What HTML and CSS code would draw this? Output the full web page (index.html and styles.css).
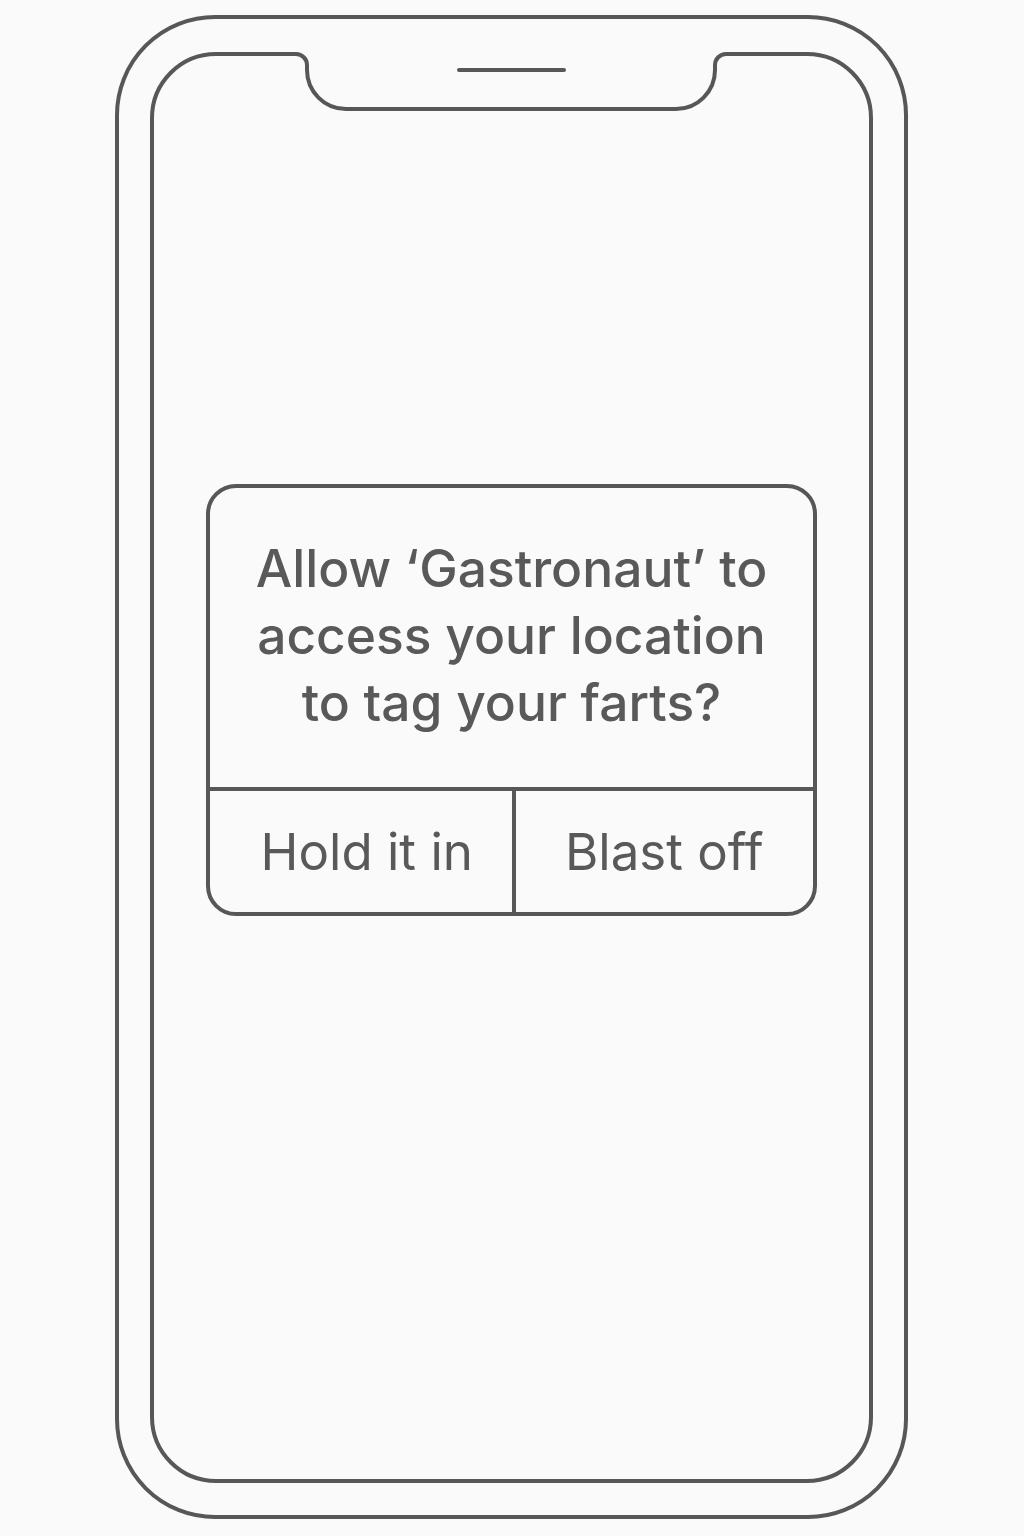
FILE: index.html
```html
<!DOCTYPE html>
<html lang="en">
<head>
<meta charset="utf-8">
<title>Location permission</title>
<link rel="stylesheet" href="styles.css">
</head>
<body>
<div class="phone">
  <div class="screen">
    <svg class="notch" width="723" height="64" viewBox="0 0 723 64" aria-hidden="true">
      <path class="notch-fill" d="M146,-1 L146,2 A11,11 0 0 1 157,13 L157,18 A39,39 0 0 0 196,57 L526,57 A39,39 0 0 0 565,18 L565,13 A11,11 0 0 1 576,2 L576,-1 Z"/>
      <path class="notch-line" d="M146,2 A11,11 0 0 1 157,13 L157,18 A39,39 0 0 0 196,57 L526,57 A39,39 0 0 0 565,18 L565,13 A11,11 0 0 1 576,2"/>
      <line class="speaker" x1="309" y1="18" x2="414" y2="18"/>
    </svg>
    <div class="dialog">
      <p class="dialog-title">Allow ‘Gastronaut’ to access your location to tag your farts?</p>
      <div class="dialog-actions">
        <div class="dialog-btn dialog-btn-left">Hold it in</div>
        <div class="dialog-btn dialog-btn-right">Blast off</div>
      </div>
    </div>
  </div>
</div>
</body>
</html>
```
FILE: styles.css
```css
html, body {
  margin: 0;
  padding: 0;
  background: #fafafa;
}

body {
  font-family: Inter, "Noto Sans", "Liberation Sans", sans-serif;
  color: #595959;
}

.phone {
  box-sizing: border-box;
  width: 793px;
  height: 1504px;
  margin: 15px 0 0 115px;
  padding: 33px 31px;
  border: 4px solid #575757;
  border-radius: 100px;
}

.screen {
  position: relative;
  box-sizing: border-box;
  width: 723px;
  height: 1431px;
  border: 4px solid #575757;
  border-radius: 66px;
  display: flex;
  flex-direction: column;
  align-items: center;
  padding-top: 428px;
}

.notch {
  position: absolute;
  left: -4px;
  top: -4px;
  overflow: visible;
}

.notch-fill {
  fill: #fafafa;
  stroke: none;
}

.notch-line {
  fill: none;
  stroke: #575757;
  stroke-width: 4;
}

.speaker {
  stroke: #575757;
  stroke-width: 4;
  stroke-linecap: round;
}

.dialog {
  box-sizing: border-box;
  width: 611px;
  border: 4px solid #575757;
  border-radius: 30px;
  display: flex;
  flex-direction: column;
}

.dialog-title {
  margin: 0;
  padding: 47px 30px 51px;
  border-bottom: 4px solid #575757;
  font-size: 51.5px;
  font-weight: 500;
  line-height: 67px;
  text-align: center;
}

.dialog-actions {
  display: flex;
  height: 121px;
}

.dialog-btn {
  box-sizing: border-box;
  flex: 0 0 50%;
  display: flex;
  align-items: center;
  justify-content: center;
  font-size: 51px;
  font-weight: 400;
  line-height: 1;
}

.dialog-btn-left {
  padding-left: 12px;
}

.dialog-btn-right {
  border-left: 4px solid #575757;
}
```
